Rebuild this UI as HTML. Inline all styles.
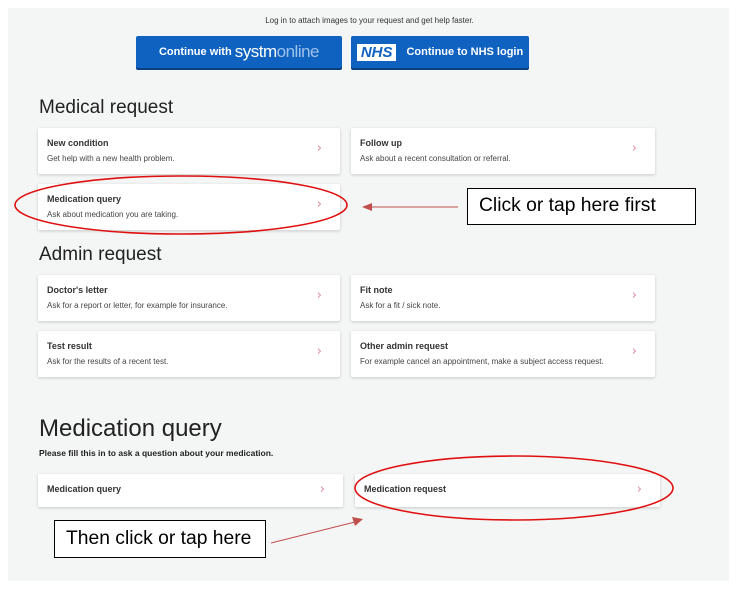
<!DOCTYPE html>
<html><head><meta charset="utf-8"><style>
body{margin:0;width:739px;height:591px;background:#fff;position:relative;overflow:hidden;font-family:"Liberation Sans",sans-serif;color:#222}
.bg{position:absolute;left:8px;top:8px;width:721px;height:573px;background:#f4f5f5}
.a{position:absolute;white-space:nowrap}
.card{position:absolute;background:#fff;box-shadow:0 1px 3px rgba(0,0,0,.18);border-radius:2px}
.card .t{position:absolute;left:9px;top:10px;font-size:9px;font-weight:bold;color:#333;white-space:nowrap}
.card .d{position:absolute;left:9px;top:26px;font-size:8px;color:#444;white-space:nowrap}
.card .c{position:absolute;right:18px;top:13px;color:#e08a9a;font-size:13px;font-family:"DejaVu Sans",sans-serif}
.btn{position:absolute;background:#0f62c0;color:#fff;font-weight:bold;font-size:11px;border-radius:2px;box-shadow:0 2px 0 #0a3f80;display:flex;align-items:center;justify-content:center;white-space:nowrap}
h2{position:absolute;margin:0;font-weight:normal;color:#222;white-space:nowrap}
.box{position:absolute;border:1.5px solid #000;background:#fff;font-family:"Liberation Sans",sans-serif;font-size:19.3px;color:#000;white-space:nowrap}
</style></head><body>
<div class="bg"></div>
<div class="a" style="left:0;width:739px;top:16px;text-align:center;font-size:8px;color:#333">Log in to attach images to your request and get help faster.</div>
<div class="btn" style="left:136px;top:36px;width:206px;height:32px">Continue with&nbsp;<span style="font-weight:normal;font-size:17px;letter-spacing:-.5px">systm<span style="color:#9ec3ea">online</span></span></div>
<div class="btn" style="left:351px;top:36px;width:178px;height:32px"><span style="background:#fff;color:#0f62c0;font-style:italic;font-weight:900;font-size:15px;padding:0 4px;margin-right:10px">NHS</span>Continue to NHS login</div>

<h2 style="left:39px;top:97px;font-size:19px">Medical request</h2>
<div class="card" style="left:38px;top:128px;width:302px;height:46px"><div class="t">New condition</div><div class="d">Get help with a new health problem.</div><div class="c">›</div></div>
<div class="card" style="left:351px;top:128px;width:304px;height:46px"><div class="t">Follow up</div><div class="d">Ask about a recent consultation or referral.</div><div class="c">›</div></div>
<div class="card" style="left:38px;top:184px;width:302px;height:46px"><div class="t">Medication query</div><div class="d">Ask about medication you are taking.</div><div class="c">›</div></div>

<h2 style="left:39px;top:244px;font-size:19px">Admin request</h2>
<div class="card" style="left:38px;top:275px;width:302px;height:46px"><div class="t">Doctor's letter</div><div class="d">Ask for a report or letter, for example for insurance.</div><div class="c">›</div></div>
<div class="card" style="left:351px;top:275px;width:304px;height:46px"><div class="t">Fit note</div><div class="d">Ask for a fit / sick note.</div><div class="c">›</div></div>
<div class="card" style="left:38px;top:331px;width:302px;height:46px"><div class="t">Test result</div><div class="d">Ask for the results of a recent test.</div><div class="c">›</div></div>
<div class="card" style="left:351px;top:331px;width:304px;height:46px"><div class="t">Other admin request</div><div class="d">For example cancel an appointment, make a subject access request.</div><div class="c">›</div></div>

<h2 style="left:39px;top:415px;font-size:24px">Medication query</h2>
<div class="a" style="left:39px;top:448px;font-size:8.5px;font-weight:bold">Please fill this in to ask a question about your medication.</div>
<div class="card" style="left:38px;top:474px;width:305px;height:33px"><div class="t">Medication query</div><div class="c" style="top:8px">›</div></div>
<div class="card" style="left:355px;top:474px;width:305px;height:33px"><div class="t">Medication request</div><div class="c" style="top:8px">›</div></div>

<div class="box" style="left:467px;top:188px;width:229px;height:37px;box-sizing:border-box;padding:6px 0 0 11px">Click or tap here first</div>
<div class="box" style="left:54px;top:520px;width:212px;height:38px;box-sizing:border-box;padding:7px 0 0 11px">Then click or tap here</div>

<svg class="a" style="left:0;top:0" width="739" height="591">
<ellipse cx="181" cy="205" rx="166" ry="29" fill="none" stroke="#e01010" stroke-width="1.6"/>
<ellipse cx="514" cy="488" rx="159" ry="32" fill="none" stroke="#e01010" stroke-width="1.6"/>
<line x1="458" y1="207" x2="370" y2="207" stroke="#c0504d" stroke-width="1"/>
<polygon points="362,207 372,203 372,211" fill="#c0504d"/>
<line x1="271" y1="543" x2="355" y2="522" stroke="#c0504d" stroke-width="1"/>
<polygon points="363,519 352,517 355,526" fill="#c0504d"/>
</svg>
</body></html>
